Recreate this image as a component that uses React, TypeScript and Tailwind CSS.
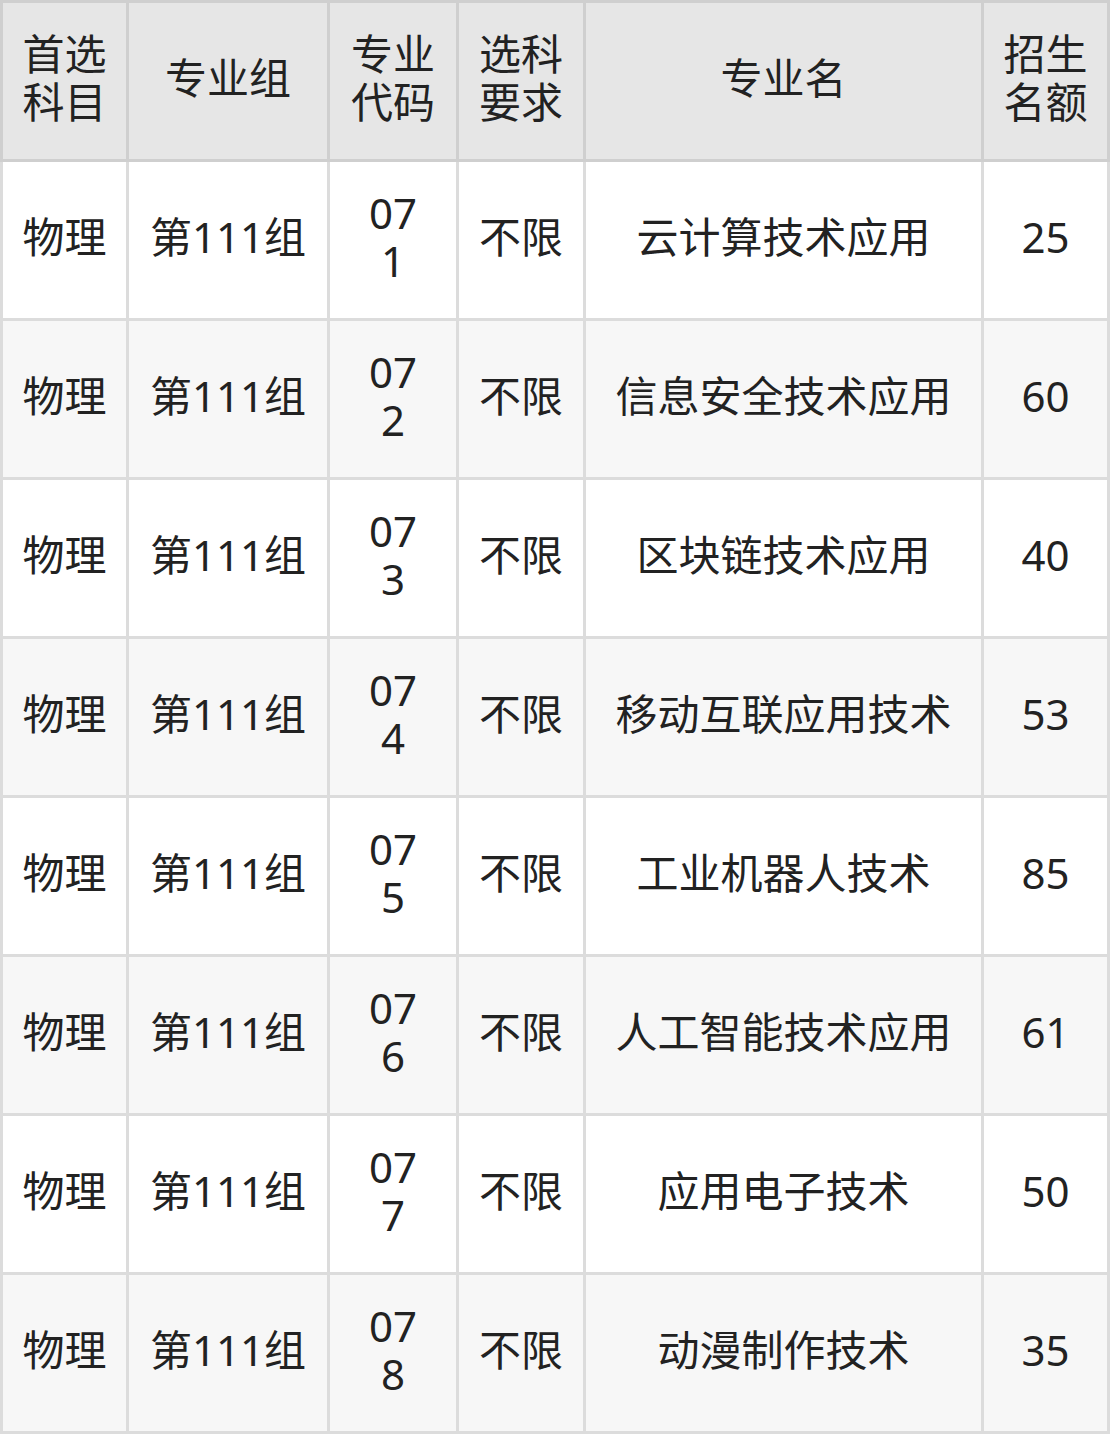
import React from "react";

const rows = [
  ["1", "云计算技术应用", "25"],
  ["2", "信息安全技术应用", "60"],
  ["3", "区块链技术应用", "40"],
  ["4", "移动互联应用技术", "53"],
  ["5", "工业机器人技术", "85"],
  ["6", "人工智能技术应用", "61"],
  ["7", "应用电子技术", "50"],
  ["8", "动漫制作技术", "35"],
];

const cols = "grid grid-cols-[123px_198px_126px_124px_395px_123px] gap-[3px]";

function Two({ a, b }: { a: string; b: string }) {
  return (
    <div className="flex flex-col items-center">
      <span className="block">{a}</span>
      <span className="block">{b}</span>
    </div>
  );
}

export default function App() {
  return (
    <div
      className="w-[1110px] h-[1434px] text-[42px] leading-[48px] text-[#222222]"
      style={{ fontFamily: '"Noto Sans", "Noto Sans CJK SC", sans-serif' }}
    >
      <div className={`${cols} bg-[#cfcfcf] p-[3px]`}>
        {[
          <Two a="首选" b="科目" />,
          <span>专业组</span>,
          <Two a="专业" b="代码" />,
          <Two a="选科" b="要求" />,
          <span>专业名</span>,
          <Two a="招生" b="名额" />,
        ].map((c, i) => (
          <div key={i} className="h-[156px] pb-[6px] bg-[#e6e6e6] flex items-center justify-center text-center">
            {c}
          </div>
        ))}
      </div>
      <div className="bg-[#dcdcdc] px-[3px] pb-[3px] flex flex-col gap-[3px]">
        {rows.map((r, i) => {
          const bg = i % 2 === 1 ? "bg-[#f7f7f7]" : "bg-white";
          const cells = [
            <span>物理</span>,
            <span>第111组</span>,
            <Two a="07" b={r[0]} />,
            <span>不限</span>,
            <span>{r[1]}</span>,
            <span>{r[2]}</span>,
          ];
          return (
            <div key={i} className={cols}>
              {cells.map((c, j) => (
                <div key={j} className={`h-[156px] pb-[6px] ${bg} flex items-center justify-center text-center`}>
                  {c}
                </div>
              ))}
            </div>
          );
        })}
      </div>
    </div>
  );
}
